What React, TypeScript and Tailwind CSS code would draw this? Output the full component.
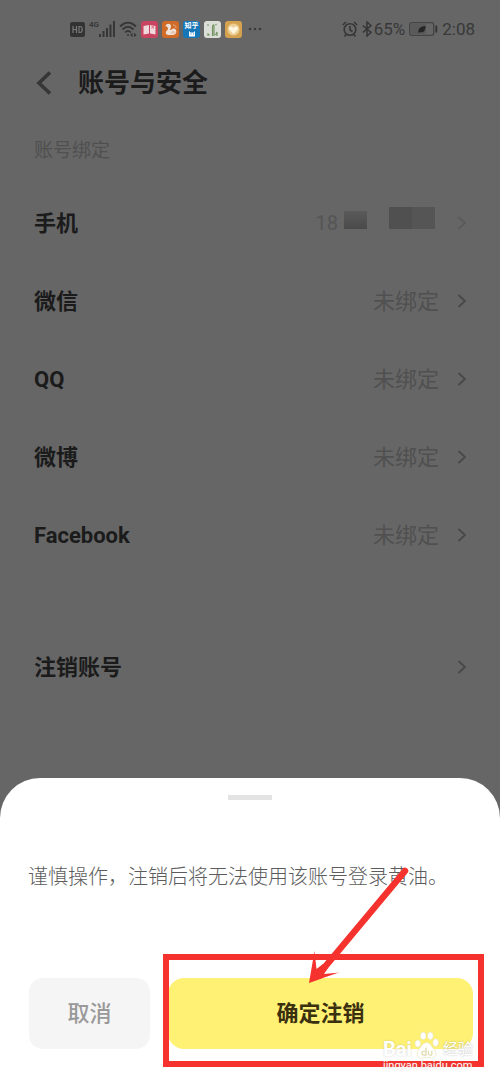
import React from "react";

const bindings = [
  { label: "手机", value: null },
  { label: "微信", value: "未绑定" },
  { label: "QQ", value: "未绑定" },
  { label: "微博", value: "未绑定" },
  { label: "Facebook", value: "未绑定" },
];

function Chevron({ faint = false }: { faint?: boolean }) {
  return (
    <svg
      viewBox="0 0 10 14"
      className={faint ? "h-[14px] w-[10px] text-[#5a5a5a]" : "h-[14px] w-[10px] text-[#484848]"}
      fill="none"
      stroke="currentColor"
      strokeWidth="1.8"
      aria-hidden="true"
    >
      <path d="M1.5 1 L8 7 L1.5 13" />
    </svg>
  );
}

function StatusBar() {
  return (
    <div className="flex h-[58px] items-center justify-between pr-[25px] pl-[70px] text-[#383838]">
      <div className="flex items-center gap-1">
        <svg viewBox="0 0 15 15" className="h-[15px] w-[15px]" aria-hidden="true">
          <rect width="15" height="15" rx="2" fill="#333" />
          <path d="M3 4v7M3 7.5h3.5M6.5 4v7M9 4.5v6h1.2c1.3 0 2-1 2-3s-.7-3-2-3z" fill="none" stroke="#777" strokeWidth="1.2" />
        </svg>
        <div className="flex w-[26px] items-start">
          <span className="text-[8px] leading-[8px] font-bold">4G</span>
          <svg viewBox="0 0 16 16" className="h-4 w-4" fill="#363636" aria-hidden="true">
            <path d="M0 13h2v3H0zM3.5 10h2v6h-2zM7 7h2v9H7zM10.500 3.500h2v12.500h-2zM14 0h2v16h-2z" />
          </svg>
        </div>
        <svg viewBox="0 0 18 16" className="h-4 w-[18px]" fill="none" stroke="#363636" strokeWidth="1.8" aria-hidden="true">
          <path d="M1 5.500C6 .500 12 .500 17 5.500M3.500 8.500c3.500-3.500 7.500-3.500 11 0M6 11.300c2-1.800 4-1.800 6 0" />
          <circle cx="9" cy="14" r="1" fill="#363636" stroke="none" />
          <path d="M11 14l2.500-2.200v4.400zM17.500 14l-2.500-2.200v4.400z" fill="#363636" stroke="none" />
        </svg>
        <svg viewBox="0 0 17 17" className="h-[17px] w-[17px]" aria-hidden="true">
          <rect width="17" height="17" rx="3" fill="#c94461" />
          <path d="M2.500 5l5.500-1v8.500l-5.500 1zM9 4l5.500 1v8.500L9 12.500z" fill="#efd9dc" />
          <path d="M10.500 4v4l1.300-1 1.200 1.300V4.500z" fill="#df8798" />
        </svg>
        <svg viewBox="0 0 17 17" className="h-[17px] w-[17px]" aria-hidden="true">
          <rect width="17" height="17" rx="3" fill="#d16c28" />
          <path d="M3.500 5c1-3 5-3 5.500 0 .3 2-1 2.500-1 4 1.500.5 2-2 4-1.500 3.500.5 3 6-.5 6.500H6.500c-3 0-3.500-3-1.500-4.500C6.500 8 6.500 6 3.500 5z" fill="#eee1d7" />
          <path d="M9.500 12c0-2 3.500-2 3 0zM11 4c2 0 3 1 3 3" fill="none" stroke="#e5b594" />
        </svg>
        <div className="flex h-[17px] w-[17px] flex-col items-center rounded-[3px] bg-[#1677b8] text-white">
          <span className="text-[7px] leading-[10px] font-bold">知乎</span>
          <svg viewBox="0 0 8 6" className="h-[6px] w-2" aria-hidden="true">
            <path d="M1 0l1.500 1.500h3L7 0v5.500H1z" fill="#fff" />
            <path d="M2.500 3h1M5 3h1" stroke="#1677b8" />
          </svg>
        </div>
        <svg viewBox="0 0 17 17" className="h-[17px] w-[17px]" aria-hidden="true">
          <rect width="17" height="17" rx="3" fill="#dcdfd8" />
          <path d="M8.500 15V6c0-2 1.500-3 1.500-1v10M4 15v-2l1.500 1M13 15v-4l-1.500 3M3 4h2M11.500 4l1-1" stroke="#749563" fill="none" strokeWidth="1.200" />
        </svg>
        <svg viewBox="0 0 17 17" className="h-[17px] w-[17px]" aria-hidden="true">
          <rect width="17" height="17" rx="3" fill="#d5a24f" />
          <circle cx="8.500" cy="8.500" r="6" fill="#ebcf95" />
          <path d="M8.500 13L4.500 9c-2-3 2-5 4-2 2-3 6-1 4 2z" fill="#fff6df" />
        </svg>
        <svg viewBox="0 0 14 4" className="ml-[2px] h-1 w-[14px]" fill="#3b3b3b" aria-hidden="true">
          <circle cx="2" cy="2" r="1.300" />
          <circle cx="7" cy="2" r="1.300" />
          <circle cx="12" cy="2" r="1.300" />
        </svg>
      </div>
      <div className="flex items-center text-[17px] leading-5">
        <svg viewBox="0 0 16 16" className="mr-1 h-4 w-4" fill="none" stroke="#363636" strokeWidth="1.600" aria-hidden="true">
          <circle cx="8" cy="8.500" r="5.800" />
          <path d="M8 5v4l2.500 1.500M.8 4L4 1M15.200 4L12 1M4 13.500l-1.500 2M12 13.500l1.500 2" />
        </svg>
        <svg viewBox="0 0 10 16" className="mr-[2px] h-4 w-[10px]" fill="none" stroke="#363636" strokeWidth="1.500" aria-hidden="true">
          <path d="M.8 4.500L9 11.500l-4 3.500V1l4 3.500L.8 11.500" />
        </svg>
        <span>65%</span>
        <svg viewBox="0 0 29 14" className="mx-1 h-[14px] w-[29px]" aria-hidden="true">
          <rect x=".7" y=".7" width="24" height="12.600" rx="2" fill="none" stroke="#444" strokeWidth="1.300" />
          <rect x="2" y="2" width="15" height="10" fill="#5a5a5a" />
          <path d="M9.500 11c-1-4 2-7 7-7 0 5-2 7-5.500 6.200z" fill="#252525" />
          <path d="M27.300 3.500v7" stroke="#333" strokeWidth="1.800" />
        </svg>
        <span>2:08</span>
      </div>
    </div>
  );
}

function MaskedNumber() {
  return (
    <span className="mr-1 flex items-start text-[20px] leading-6 text-[#555555]">
      <span>18</span>
      <span className="ml-[6px] h-[18px] w-[23px] bg-linear-to-b from-[#5a5a5a] to-[#4a4a4a]" />
      <span className="-mt-1 ml-[22px] h-[22px] w-[23px] bg-[#505050]" />
      <span className="-mt-1 h-[22px] w-[23px] bg-[#555555]" />
    </span>
  );
}

function Watermark() {
  return (
    <div className="pointer-events-none absolute right-0 -bottom-[23px] flex w-[90px] flex-col text-white">
      <div className="flex items-end justify-between">
        <span className="text-[20px] leading-5 font-bold [text-shadow:0_0_2px_#8886]">Bai</span>
        <svg viewBox="0 0 27 29" className="h-[28px] w-[26px]" fill="#fff" stroke="#e3dfaf" strokeWidth=".6" aria-hidden="true">
          <ellipse cx="4" cy="13" rx="3" ry="3.800" />
          <ellipse cx="9.500" cy="5" rx="3" ry="4" />
          <ellipse cx="17" cy="5" rx="3" ry="4" />
          <ellipse cx="22.500" cy="12" rx="3" ry="4" />
          <path d="M13 12c4 0 5 4 8 7 4 5 1 10-4 9-3-.8-5-.8-8 0-5 1-8-4-4-9 3-3 4-7 8-7z" />
          <path d="M12.500 17v8H10c-2.500-.5-2.500-4 0-4h2.500M15 20.500V24c.5 1.500 3.500 1.500 3.500 0v-3.500V25" fill="none" stroke="#ddd8a6" strokeWidth="1.200" />
        </svg>
        <span className="text-[15px] leading-5 [text-shadow:0_0_2px_#888a]">经验</span>
      </div>
      <span className="text-[11px] leading-[13px] [text-shadow:0_0_2px_#8884]">jingyan.baidu.com</span>
    </div>
  );
}

export default function App() {
  return (
    <div className="flex min-h-screen flex-col bg-[#666666] font-[Roboto,'Noto_Sans_CJK_SC',sans-serif]">
      <StatusBar />
      <header className="flex h-[50px] items-center pl-[36px]">
        <button type="button" aria-label="返回" className="mr-[26px]">
          <svg viewBox="0 0 16 24" className="h-6 w-4" fill="none" stroke="#363636" strokeWidth="3.600" aria-hidden="true">
            <path d="M14 1.500L3 12l11 10.500" />
          </svg>
        </button>
        <h1 className="text-[26px] leading-9 font-bold text-[#1b1b1b]">账号与安全</h1>
      </header>
      <main className="pr-[33px] pl-[34px]">
        <h2 className="mt-[10px] flex h-[66px] items-center text-[19px] text-[#505050]">账号绑定</h2>
        {bindings.map(({ label, value }) => (
          <button key={label} type="button" className="flex h-[78px] w-full items-center text-[22px]">
            <span className="font-bold text-[#1b1b1b]">{label}</span>
            <span className="mr-[18px] ml-auto text-[#505050]">{value ?? <MaskedNumber />}</span>
            <Chevron faint={!value} />
          </button>
        ))}
        <button type="button" className="mt-[54px] flex h-[78px] w-full items-center justify-between text-[22px]">
          <span className="font-bold text-[#1b1b1b]">注销账号</span>
          <Chevron />
        </button>
      </main>
      <section role="dialog" aria-label="注销账号" className="mt-auto rounded-t-[40px] bg-white pt-[17px] pb-[34px]">
        <div className="mx-auto h-[5px] w-[44px] bg-[#e3e3e3]" />
        <p className="mt-[61px] px-7 text-[20px] leading-8 font-light text-[#5c5c5c]">
          谨慎操作，注销后将无法使用该账号登录黄油。
        </p>
        <div className="mt-[85px] flex h-[71px] gap-[18px] pr-[27px] pl-[29px] text-[22px]">
          <button type="button" className="w-[121px] rounded-[14px] bg-[#f5f5f5] font-medium text-[#999999]">
            取消
          </button>
          <div className="relative flex flex-1">
            <button type="button" className="flex-1 rounded-[16px] bg-[#fef173] font-bold text-[#3a300f]">
              确定注销
            </button>
            <div className="pointer-events-none absolute -top-6 -right-[11px] -bottom-[18px] -left-[5px] border-6 border-[#f5322d]" />
            <svg
              viewBox="0 0 110 120"
              className="pointer-events-none absolute -top-[112px] left-[136px] h-[120px] w-[110px]"
              fill="#f5322d"
              aria-hidden="true"
            >
              <path d="M101 5L20 102" fill="none" stroke="#f5322d" strokeWidth="6.500" strokeLinecap="round" />
              <path d="M5 117L10.500 85L12.500 103L19 98L24 102L20 108L36 106.500C27 108.500 17 113 5 117z" />
            </svg>
            <Watermark />
          </div>
        </div>
      </section>
    </div>
  );
}
